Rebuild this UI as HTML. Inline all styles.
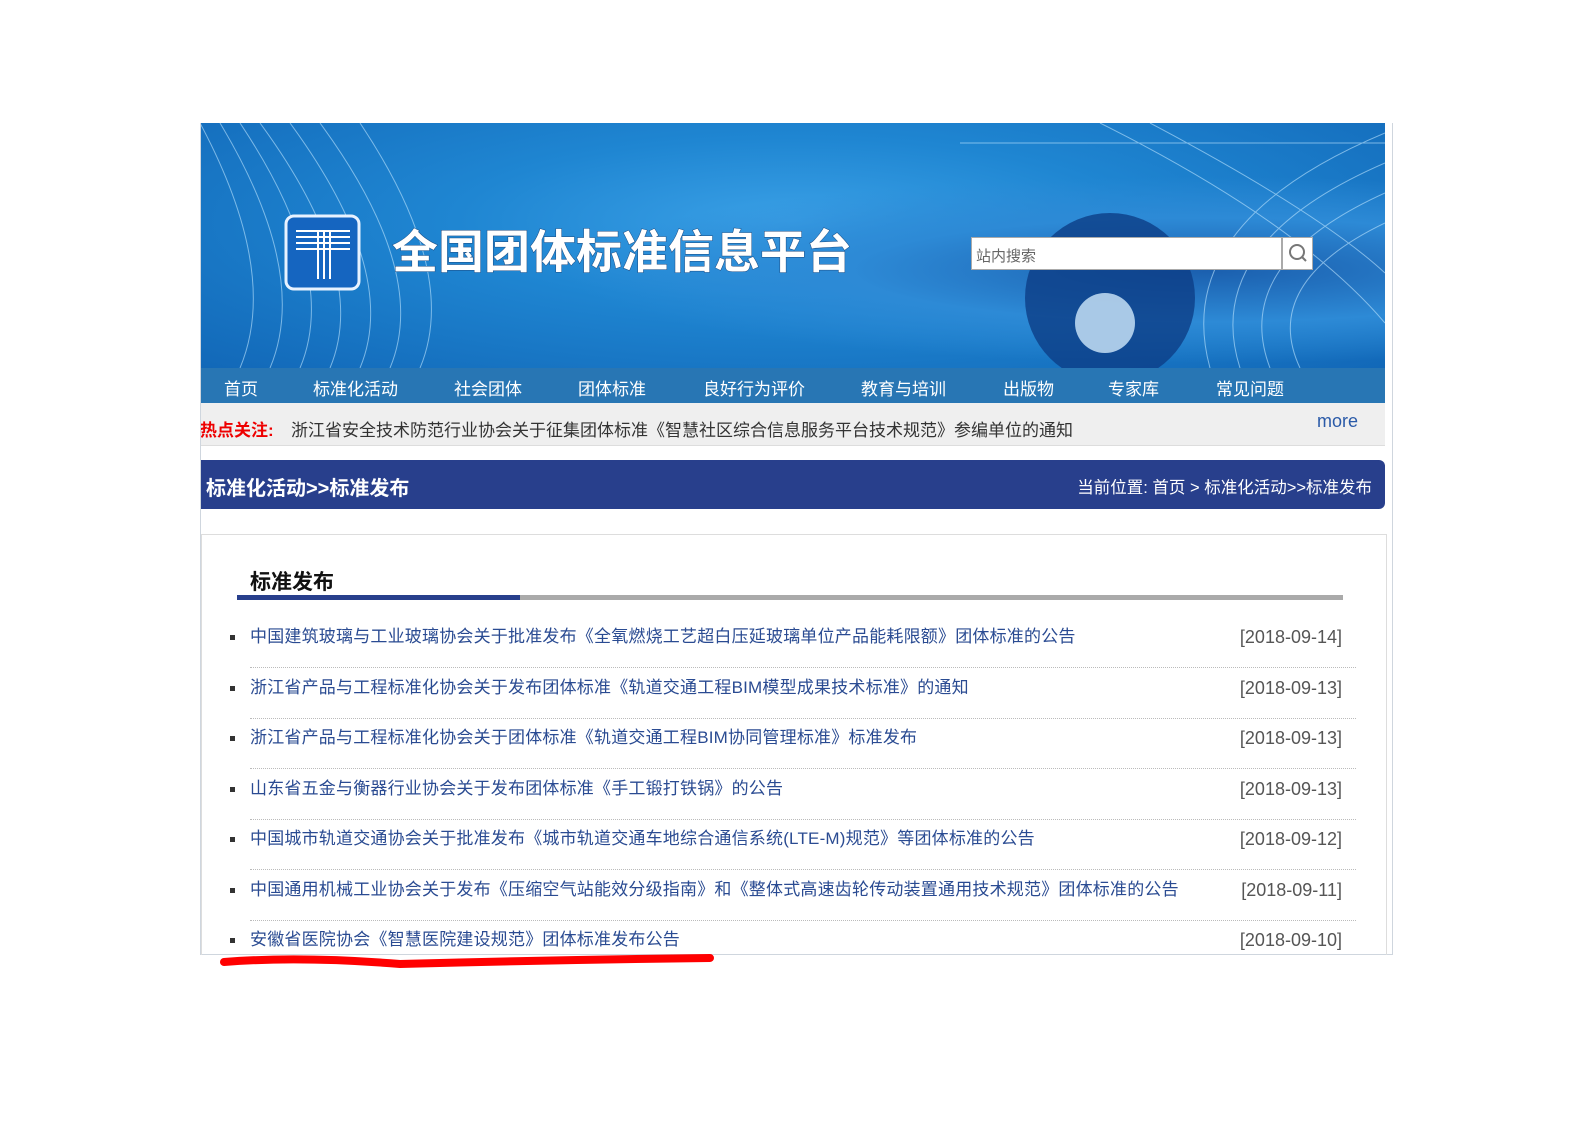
<!DOCTYPE html>
<html><head><meta charset="utf-8"><style>
*{margin:0;padding:0;box-sizing:border-box}
body{width:1587px;height:1122px;background:#fff;position:relative;font-family:"Liberation Sans","Noto Sans CJK SC",sans-serif;overflow:hidden}
.frame{position:absolute;left:200px;top:123px;width:1193px;height:832px;border:1px solid #cfd6de;border-top:none}
.banner{position:absolute;left:200px;top:123px;width:1185px;height:245px;background:radial-gradient(ellipse at 85% 60%,#1b5fae 0,#2d8ad6 25%,transparent 45%),radial-gradient(ellipse at 50% 40%,#3aa0e6 0,#1f86d2 40%,#1268b8 100%);overflow:hidden}
.nav{position:absolute;left:200px;top:368px;width:1185px;height:35px;background:#2876b4}
.nav span{position:absolute;top:7px;color:#fff;font-size:17px}
.hot{position:absolute;left:200px;top:403px;width:1185px;height:43px;background:#efefef;border-bottom:1px solid #ddd}
.tbar{position:absolute;left:200px;top:460px;width:1185px;height:49px;background:#283f8c;border-radius:0 6px 6px 0;color:#fff}
.box{position:absolute;left:201px;top:534px;width:1186px;height:421px;border:1px solid #ddd;border-bottom:none}
.item{position:absolute;left:250px;width:1106px;height:51px;border-bottom:1px dotted #bbb;font-size:17px;line-height:24px}
.item a{position:absolute;left:0;top:8px;color:#2a4b92;text-decoration:none;letter-spacing:0.2px}
.item i{position:absolute;left:-20px;top:18px;width:5px;height:5px;background:#333}
.item b{position:absolute;right:14px;top:8px;font-weight:normal;color:#555;font-size:18px}
</style></head><body>
<div class="banner">
<svg width="1185" height="245" style="position:absolute;left:0;top:0">
<g stroke="#bfe6ff" stroke-width="1" fill="none" opacity=".6">
<path d="M0 0 Q80 150 40 245"/><path d="M20 0 Q110 150 70 245"/><path d="M40 0 Q140 150 100 245"/><path d="M60 0 Q170 150 130 245"/><path d="M90 0 Q200 150 160 245"/><path d="M120 0 Q230 150 190 245"/><path d="M160 0 Q260 150 220 245"/>
<path d="M1185 40 Q1000 120 1040 245"/><path d="M1185 70 Q1030 140 1070 245"/><path d="M1185 100 Q1060 160 1100 245"/><path d="M1185 10 Q970 100 1010 245"/><path d="M900 0 Q1100 100 1185 200"/><path d="M950 0 Q1120 90 1185 150"/>
<path d="M760 20 H1185"/></g>
<circle cx="910" cy="175" r="85" fill="#0d3d86" opacity=".8"/>
<ellipse cx="905" cy="200" rx="30" ry="30" fill="#cfe8fb" opacity=".8"/>
<rect x="86" y="93" width="73" height="73" rx="8" fill="#1565c0" stroke="#e8f2ff" stroke-width="3"/>
<g stroke="#fff" stroke-width="2"><path d="M96 108H150M96 114H150M96 120H150M96 126H150"/><path d="M118 108V156M124 108V156M130 108V156"/></g>
<text x="192" y="145" font-size="46" font-weight="bold" fill="#fff" font-family="Noto Sans CJK SC" style="paint-order:stroke" stroke="#1a4a80" stroke-width="1">全国团体标准信息平台</text>
</svg>
<div style="position:absolute;left:771px;top:114px;width:311px;height:33px;background:#fff;border:1px solid #aaa;font-size:15px;color:#666;padding:7px 4px">站内搜索</div>
<div style="position:absolute;left:1082px;top:114px;width:31px;height:33px;background:#fff;border:1px solid #aaa"><svg width="29" height="31"><circle cx="14" cy="14" r="7" stroke="#777" stroke-width="2" fill="none"/><path d="M19 19L23 23" stroke="#777" stroke-width="2"/></svg></div>
</div>
<div class="nav"><span style="left:24px">首页</span><span style="left:113px">标准化活动</span><span style="left:254px">社会团体</span><span style="left:378px">团体标准</span><span style="left:503px">良好行为评价</span><span style="left:661px">教育与培训</span><span style="left:803px">出版物</span><span style="left:908px">专家库</span><span style="left:1016px">常见问题</span></div>
<div class="hot"><span style="position:absolute;left:0;top:13px;color:#e00;font-weight:bold;font-size:17px">热点关注:</span><span style="position:absolute;left:91px;top:13px;color:#333;font-size:17px">浙江省安全技术防范行业协会关于征集团体标准《智慧社区综合信息服务平台技术规范》参编单位的通知</span><span style="position:absolute;left:1117px;top:8px;color:#2a5aa8;font-size:18px">more</span></div>
<div class="tbar"><span style="position:absolute;left:6px;top:12px;font-size:20px;font-weight:bold">标准化活动&gt;&gt;标准发布</span><span style="position:absolute;right:13px;top:14px;font-size:16.5px">当前位置: 首页 &gt; 标准化活动&gt;&gt;标准发布</span></div>
<div class="frame"></div>
<div class="box"></div>
<div style="position:absolute;left:250px;top:566px;font-size:21px;font-weight:bold;color:#111">标准发布</div>
<div style="position:absolute;left:237px;top:595px;width:1106px;height:5px;background:#aaa"><div style="width:283px;height:5px;background:#283f8c"></div></div>
<div class="item" style="top:617px"><i></i><a>中国建筑玻璃与工业玻璃协会关于批准发布《全氧燃烧工艺超白压延玻璃单位产品能耗限额》团体标准的公告</a><b>[2018-09-14]</b></div>
<div class="item" style="top:668px"><i></i><a>浙江省产品与工程标准化协会关于发布团体标准《轨道交通工程BIM模型成果技术标准》的通知</a><b>[2018-09-13]</b></div>
<div class="item" style="top:718px"><i></i><a>浙江省产品与工程标准化协会关于团体标准《轨道交通工程BIM协同管理标准》标准发布</a><b>[2018-09-13]</b></div>
<div class="item" style="top:769px"><i></i><a>山东省五金与衡器行业协会关于发布团体标准《手工锻打铁锅》的公告</a><b>[2018-09-13]</b></div>
<div class="item" style="top:819px"><i></i><a>中国城市轨道交通协会关于批准发布《城市轨道交通车地综合通信系统(LTE-M)规范》等团体标准的公告</a><b>[2018-09-12]</b></div>
<div class="item" style="top:870px"><i></i><a>中国通用机械工业协会关于发布《压缩空气站能效分级指南》和《整体式高速齿轮传动装置通用技术规范》团体标准的公告</a><b>[2018-09-11]</b></div>
<div class="item" style="top:920px;border:none"><i></i><a>安徽省医院协会《智慧医院建设规范》团体标准发布公告</a><b>[2018-09-10]</b></div>
<svg width="1587" height="1122" style="position:absolute;left:0;top:0"><path d="M224 962 Q300 956 400 964 Q550 960 710 958" stroke="#f00" stroke-width="8" fill="none" stroke-linecap="round"/></svg>
</body></html>
